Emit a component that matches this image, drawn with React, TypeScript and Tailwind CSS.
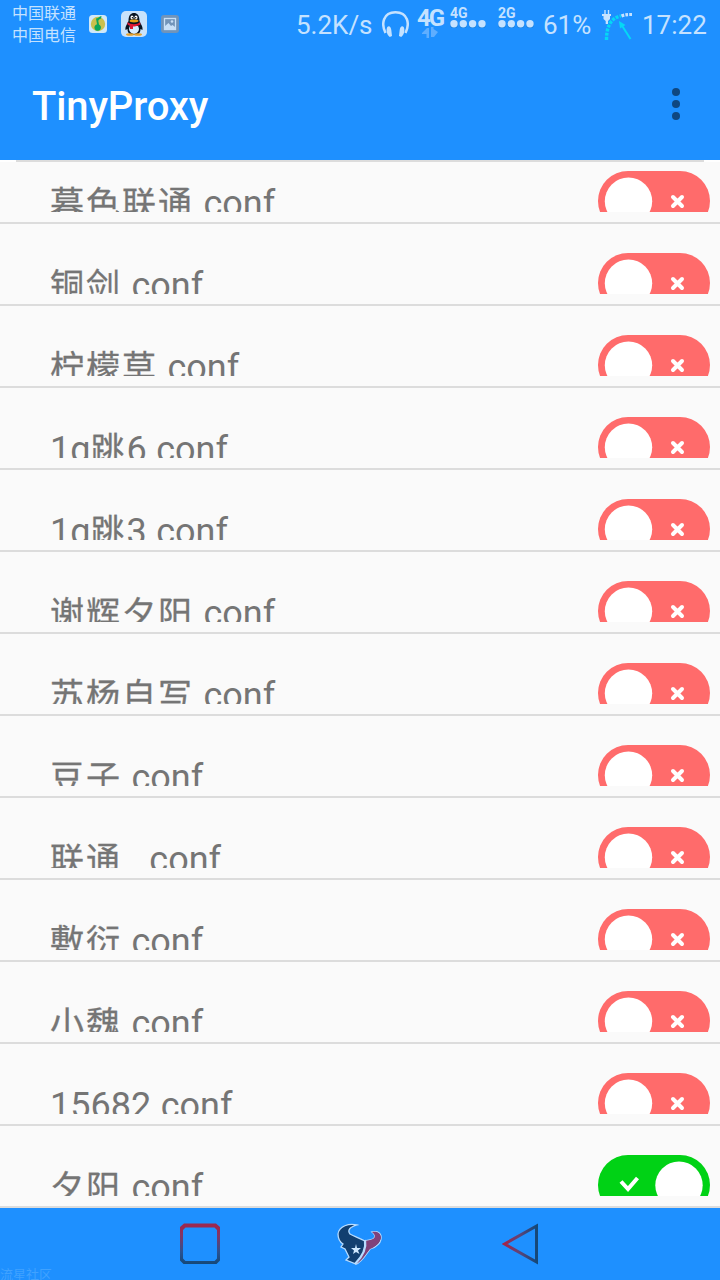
import React from "react";

type Entry = { name: string; on?: boolean };

const entries: Entry[] = [
  { name: "暮色联通.conf" },
  { name: "铜剑.conf" },
  { name: "柠檬草.conf" },
  { name: "1g跳6.conf" },
  { name: "1g跳3.conf" },
  { name: "谢辉夕阳.conf" },
  { name: "苏杨自写.conf" },
  { name: "豆子.conf" },
  { name: "联通  .conf" },
  { name: "敷衍.conf" },
  { name: "小魏.conf" },
  { name: "15682.conf" },
  { name: "夕阳.conf", on: true },
];

function Toggle({ on }: { on?: boolean }) {
  return (
    <svg className="block h-[60px] w-28 shrink-0" viewBox="0 0 112 60">
      <rect width="112" height="60" rx="30" fill={on ? "#00d215" : "#ff6b6b"} />
      {on ? (
        <>
          <path d="M23 26.500 L30 34 L39.500 23" fill="none" stroke="#fff" strokeWidth="4" />
          <circle cx="81" cy="30.2" r="23.7" fill="#fff" />
        </>
      ) : (
        <>
          <path d="M75 26 L84 35 M84 26 L75 35" stroke="#fff" strokeWidth="4" strokeLinecap="round" />
          <circle cx="30.5" cy="30.2" r="23.7" fill="#fff" />
        </>
      )}
    </svg>
  );
}

/* Han glyphs are drawn a little smaller than the Latin text, on the same advance. */
function FileName({ name }: { name: string }) {
  return (
    <span className="pt-3 text-[36px] leading-[42px] whitespace-pre text-[#757575]">
      {name.split(/([\u4e00-\u9fff]+)/).map((part, i) =>
        i % 2 ? (
          <span
            key={i}
            className="align-baseline text-[34px] leading-none tracking-[2px] [-webkit-text-stroke:0.3px_#757575]"
          >
            {part}
          </span>
        ) : (
          part
        ),
      )}
    </span>
  );
}

function Row({ entry, first }: { entry: Entry; first: boolean }) {
  return (
    <li
      className={`flex flex-col justify-end border-b-2 border-[#dcdcdc] pb-[10px] ${first ? "h-[62px]" : "h-[82px]"}`}
    >
      <div className="flex h-[41px] items-start justify-between overflow-hidden pr-[10px] pl-[50px]">
        <FileName name={entry.name} />
        <Toggle on={entry.on} />
      </div>
    </li>
  );
}

function Signal({ label }: { label: string }) {
  return (
    <div className="flex w-9 flex-col">
      <span className="h-[13px] text-[14px] leading-[13px] font-bold">{label}</span>
      <svg className="h-2 w-9" viewBox="0 0 36 8" fill="currentColor">
        <g fill="#1876c8" opacity=".6">
          <circle cx="4" cy="4.7" r="3.8" />
          <circle cx="13.3" cy="4.7" r="3.8" />
          <circle cx="22.6" cy="4.7" r="3.8" />
          <circle cx="32" cy="4.7" r="3.8" />
        </g>
        <circle cx="4" cy="3.7" r="3.7" />
        <circle cx="13.3" cy="3.7" r="3.7" />
        <circle cx="22.6" cy="3.7" r="3.7" />
        <circle cx="32" cy="3.7" r="3.7" />
      </svg>
    </div>
  );
}

function StatusBar() {
  return (
    <div className="flex h-12 items-start text-[#c5e2ff]">
      <div className="ml-3 flex w-[76px] flex-col pt-[3px] text-[16px] leading-[22px]">
        <span>中国联通</span>
        <span>中国电信</span>
      </div>
      <svg className="mt-[14px] ml-px h-5 w-[18px]" viewBox="0 0 18 20">
        <rect y="1" width="18" height="18" rx="3.5" fill="#d0e8f8" />
        <circle cx="9" cy="10" r="7.2" fill="#c9c04d" />
        <path d="M7 4.500 C9 4.500 10 2.500 12.500 2 L12 4.500 C10.500 5 9.500 6 9.300 7 L10 10.500 A3.300 3.300 0 1 1 8 10.300 Z" fill="#0aa55b" />
      </svg>
      <svg className="mt-[11px] ml-[14px] h-[26px] w-[26px]" viewBox="0 0 26 26">
        <rect width="26" height="26" rx="5" fill="#c8e2fb" />
        <path d="M7.500 10 C7.500 4 10 2 13 2 S18.500 4 18.500 10 C20 14 22 15 21.500 19 L19.500 18 C19.500 22 17 24 13 24 S6.500 22 6.500 18 L4.500 19 C4 15 6 14 7.500 10 Z" fill="#071423" />
        <path d="M9 15 C7 18 8 22 13 23 C18 22 19 18 17 15 Z" fill="#d7ecff" />
        <ellipse cx="11" cy="6.500" rx="1.500" ry="2" fill="#fff" />
        <ellipse cx="15" cy="6.500" rx="1.500" ry="2" fill="#fff" />
        <circle cx="11.400" cy="6.700" r=".7" />
        <circle cx="14.700" cy="6.700" r=".7" />
        <ellipse cx="13" cy="10" rx="4.500" ry="1.400" fill="#e8a018" />
        <path d="M6.500 11 C10 14 16 14 19 11 L19.500 13.500 C17 15 14 15.500 12 15.500 V18 H9 V15 L6.500 13.500Z" fill="#df1735" />
        <ellipse cx="9" cy="23.500" rx="4" ry="1.300" fill="#e5a22d" />
        <ellipse cx="17" cy="23.500" rx="4" ry="1.300" fill="#e5a22d" />
      </svg>
      <svg className="mt-[15px] ml-[14px] h-[18px] w-[18px]" viewBox="0 0 18 18">
        <rect width="18" height="18" rx="3" fill="#7194ba" />
        <rect x="3.500" y="3.500" width="11" height="11" fill="none" stroke="#c8e0f8" strokeWidth="1.300" />
        <path d="M4 11 L7.500 8 L10 11 L11.500 10 L14 12 V14 H4Z" fill="#c8e0f8" />
        <circle cx="11" cy="6.500" r="1.300" fill="#c8e0f8" />
      </svg>
      <span className="mt-[9px] ml-[117px] w-[77px] text-[26px] leading-8 whitespace-nowrap">5.2K/s</span>
      <svg className="mt-[10px] ml-[9px] h-7 w-[27px]" viewBox="0 0 27 28" fill="none" stroke="currentColor">
        <path d="M3.500 23 C-1 14 1 2.200 13.500 2.200 S28 14 23.500 23" strokeWidth="2.500" />
        <path d="M5.300 17 C7 15 9 17 9.300 20 L10 26 L7.800 27 C4.800 25 3.800 20 5.300 17Z M21.700 17 C20 15 18 17 17.700 20 L17 26 L19.200 27 C22.200 25 23.200 20 21.700 17Z" fill="currentColor" stroke="none" />
      </svg>
      <div className="mt-[7px] ml-2 flex w-7 flex-col">
        <span className="h-5 text-[24px] leading-[23px] font-bold tracking-[-2px]">4G</span>
        <svg className="ml-[5px] h-[11px] w-4" viewBox="0 0 16 11" fill="#5faeff">
          <path d="M0 6 L5 1 H7 V11 H4.500 V7 H0Z M9 0 H11.500 V2 L16 5 L12 10 H9Z" />
        </svg>
      </div>
      <div className="mt-[7px] ml-[5px]">
        <Signal label="4G" />
      </div>
      <div className="mt-[7px] ml-3">
        <Signal label="2G" />
      </div>
      <span className="mt-[9px] ml-[9px] w-[49px] text-[26px] leading-8">61%</span>
      <svg className="mt-[10px] ml-[10px] h-[30px] w-8" viewBox="0 0 32 30">
        <path d="M3 0 V4 M6.500 0 V4" stroke="#c5e2ff" strokeWidth="1.400" />
        <path d="M0 4 H9 V6 H8 V9 L6 11 V14 H3.700 V11 L1.500 9 V6 H0Z" fill="#c5e2ff" />
        <path d="M4.500 30 C4.500 16 9 8 19 5.800" fill="none" stroke="#05d8f5" strokeWidth="3.400" strokeDasharray="3 1.200" />
        <path d="M19.500 6 C23 4.500 26 4.500 30 4.500" fill="none" stroke="#c5e2ff" strokeWidth="3.200" strokeDasharray="2.800 1.200" />
        <path d="M28.500 29 L19 14" stroke="#05d8f5" strokeWidth="2" />
        <path d="M17 11 L23.500 15 L18 18.500Z" fill="#05d8f5" />
      </svg>
      <span className="mt-[9px] ml-2 text-[26px] leading-8">17:22</span>
    </div>
  );
}

function NavBar() {
  return (
    <nav className="flex h-[72px] items-start bg-[#1e90ff]">
      <span className="mt-[58px] w-[180px] text-[13px] leading-[18px] text-[#40a2ff]">流星社区</span>
      <svg className="mt-[15px] h-[41px] w-10" viewBox="0 0 40 41">
        <defs>
          <linearGradient id="frame" x1="0" x2="0" y1="0" y2="1">
            <stop offset="0.1" stopColor="#9c2950" />
            <stop offset="0.3" stopColor="#803666" />
            <stop offset="0.7" stopColor="#2a5291" />
            <stop offset="1" stopColor="#154878" />
          </linearGradient>
        </defs>
        <path fillRule="evenodd" fill="url(#frame)" d="M4 0.500 H36 L40 4 V37.500 L36.500 41 H3.500 L0 37.500 V4Z M5.500 4.500 L3 7 V35.500 L5.500 38 H34.500 L37 35.500 V7 L34.500 4.500Z" />
      </svg>
      <svg className="mt-[14px] ml-[116px] h-[44px] w-[48px]" viewBox="0 0 48 44">
        <path d="M21 3 C13 1 3 4 2 12 C2 16 4 20 7 22 L5 25 L9 27 L13 35 L10 38 L20 42 C25 41 29 34 34 27 C41 25 46 20 45 14 C44 10 41 9 36 10 C41 14 39 17 34 18 L29 19 C23 16 18 14 14 12 C11 8 14 5 21 3Z" fill="#123f70" stroke="#b7dcff" strokeWidth="1.300" />
        <path d="M29 19 L34 18 C39 17 41 14 36 10 C42 9 45 12 45 16 C44 21 39 25 34 27 C29 33 27 38 20 42 C26 35 28 28 29 19Z" fill="#81417a" />
        <path d="M29 18 C31 29 24 37 19 42" fill="none" stroke="#b7dcff" strokeWidth="2.300" />
        <path d="M20 22 L21 26 L25 26 L22 28.500 L23.500 32 L20 30 L17 32 L18 28.500 L15 26 L19 26Z" fill="#cfe8ff" />
      </svg>
      <svg className="mt-[15px] ml-[118px] h-[42px] w-[38px]" viewBox="0 0 38 42">
        <defs>
          <linearGradient id="arrow" x1="0" x2="1" y1="0" y2="0">
            <stop offset="0" stopColor="#a52448" />
            <stop offset="0.45" stopColor="#5f4479" />
            <stop offset="1" stopColor="#154878" />
          </linearGradient>
        </defs>
        <path d="M34.500 3 L2.500 21 L34.500 39Z" fill="none" stroke="url(#arrow)" strokeWidth="3" />
      </svg>
    </nav>
  );
}

export default function App() {
  return (
    <div className="flex h-[1280px] w-[720px] flex-col overflow-hidden bg-[#fafafa] font-['Roboto','Noto_Sans_CJK_SC',sans-serif]">
      <header className="h-40 shrink-0 bg-[#1e90ff]">
        <StatusBar />
        <div className="flex h-28 items-center justify-between pr-10 pl-8">
          <h1 className="pt-1.5 text-[40px] leading-[48px] font-medium tracking-[-0.15px] text-white">TinyProxy</h1>
          <button type="button" aria-label="Menu" className="flex flex-col gap-1">
            <span className="size-2 rounded-full bg-[#0f4780]" />
            <span className="size-2 rounded-full bg-[#0f4780]" />
            <span className="size-2 rounded-full bg-[#0f4780]" />
          </button>
        </div>
      </header>
      <div className="shrink-0 bg-white px-4">
        <div className="h-0.5 bg-[#dcdcdc]" />
      </div>
      <ul className="shrink-0">
        {entries.map((entry, i) => (
          <Row key={entry.name} entry={entry} first={i === 0} />
        ))}
      </ul>
      <NavBar />
    </div>
  );
}
